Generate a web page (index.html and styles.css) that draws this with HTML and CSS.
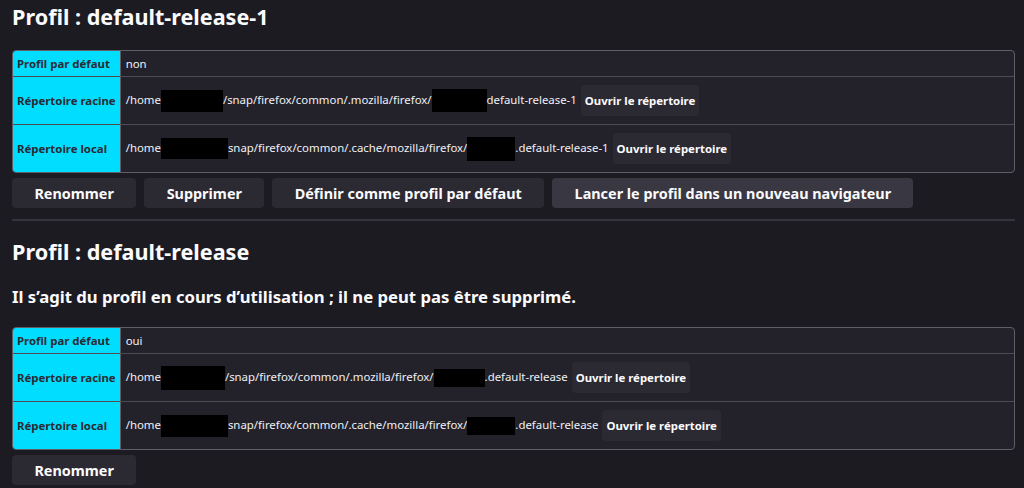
FILE: index.html
```html
<!DOCTYPE html>
<html lang="fr">
<head>
<meta charset="utf-8">
<title>À propos des profils</title>
<link rel="stylesheet" href="styles.css">
</head>
<body>
<main class="page">
  <section class="profile">
    <h2 class="profile-title">Profil : default-release-1</h2>
    <table class="info">
      <tr class="row-short">
        <th>Profil par défaut</th>
        <td>non</td>
      </tr>
      <tr>
        <th>Répertoire racine</th>
        <td>/home<span class="redact w62 h22"></span>/snap/firefox/common/.mozilla/firefox/<span class="redact w55 h23"></span>default-release-1 <button class="open-btn">Ouvrir le répertoire</button></td>
      </tr>
      <tr>
        <th>Répertoire local</th>
        <td>/home<span class="redact w67 h21"></span>snap/firefox/common/.cache/mozilla/firefox/<span class="redact w48 h24"></span>.default-release-1 <button class="open-btn">Ouvrir le répertoire</button></td>
      </tr>
    </table>
    <div class="actions">
      <button class="action-btn">Renommer</button>
      <button class="action-btn">Supprimer</button>
      <button class="action-btn">Définir comme profil par défaut</button>
      <button class="action-btn is-hover">Lancer le profil dans un nouveau navigateur</button>
    </div>
  </section>
  <hr class="sep">
  <section class="profile">
    <h2 class="profile-title">Profil : default-release</h2>
    <p class="current-note">Il s’agit du profil en cours d’utilisation ; il ne peut pas être supprimé.</p>
    <table class="info">
      <tr class="row-short">
        <th>Profil par défaut</th>
        <td>oui</td>
      </tr>
      <tr>
        <th>Répertoire racine</th>
        <td>/home<span class="redact w64 h24"></span>/snap/firefox/common/.mozilla/firefox/<span class="redact w51 h18"></span>.default-release <button class="open-btn">Ouvrir le répertoire</button></td>
      </tr>
      <tr>
        <th>Répertoire local</th>
        <td>/home<span class="redact w67 h22"></span>snap/firefox/common/.cache/mozilla/firefox/<span class="redact w48 h18"></span>.default-release <button class="open-btn">Ouvrir le répertoire</button></td>
      </tr>
    </table>
    <div class="actions">
      <button class="action-btn">Renommer</button>
    </div>
  </section>
</main>
</body>
</html>
```
FILE: styles.css
```css
html, body {
  margin: 0;
  padding: 0;
  background: #1c1b22;
  color: #fbfbfe;
  font-family: "Noto Sans", "Open Sans", sans-serif;
}

.page {
  width: 1003px;
  padding: 2px 0 0 12px;
}

.profile-title {
  margin: 0;
  font-size: 21.6px;
  line-height: 30px;
  font-weight: 700;
}

.profile .info {
  margin-top: 18px;
}

.current-note {
  margin: 19px 0 0;
  font-size: 16.7px;
  line-height: 22px;
  font-weight: 700;
}

.current-note + .info {
  margin-top: 19px;
}

.info {
  width: 100%;
  border-collapse: separate;
  border-spacing: 0;
  border: 1px solid #5f5e68;
  border-radius: 4px;
  overflow: hidden;
  background: #23222b;
  font-size: 11.4px;
}

.info th {
  width: 1%;
  white-space: nowrap;
  background: #00ddff;
  color: #2b2a33;
  font-weight: 700;
  text-align: left;
  padding: 0 4px;
  border-right: 1px solid #5f5e68;
  border-bottom: 1px solid #4d4c55;
  line-height: 17px;
}

.info td {
  padding: 4px 5px;
  line-height: 17px;
  border-bottom: 1px solid #4d4c55;
  white-space: nowrap;
  color: #f0f0f4;
}

.info tr:last-child th,
.info tr:last-child td {
  border-bottom: none;
}

.redact {
  display: inline-block;
  background: #000;
  vertical-align: middle;
}
.w48 { width: 48px; }
.w51 { width: 51px; }
.w55 { width: 55px; }
.w62 { width: 62px; }
.w64 { width: 64px; }
.w67 { width: 67px; }
.h18 { height: 18px; }
.h21 { height: 21px; }
.h22 { height: 22px; }
.h23 { height: 23px; }
.h24 { height: 24px; }

.open-btn {
  font-family: inherit;
  font-size: 11.4px;
  font-weight: 700;
  color: #fbfbfe;
  background: #2b2a33;
  border: none;
  border-radius: 4px;
  height: 31px;
  padding: 0 4px;
  margin: 4px 0 4px 1px;
  vertical-align: middle;
}

.actions {
  display: flex;
  gap: 8px;
  margin-top: 5px;
}

.action-btn {
  font-family: inherit;
  font-size: 14.4px;
  font-weight: 700;
  color: #fbfbfe;
  background: #2b2a33;
  border: none;
  border-radius: 4px;
  height: 30px;
  padding: 0 22.4px;
}

.action-btn.is-hover {
  background: #393842;
}

.sep {
  border: none;
  border-top: 2px solid #35343c;
  margin: 11px 0 16px;
}
```
